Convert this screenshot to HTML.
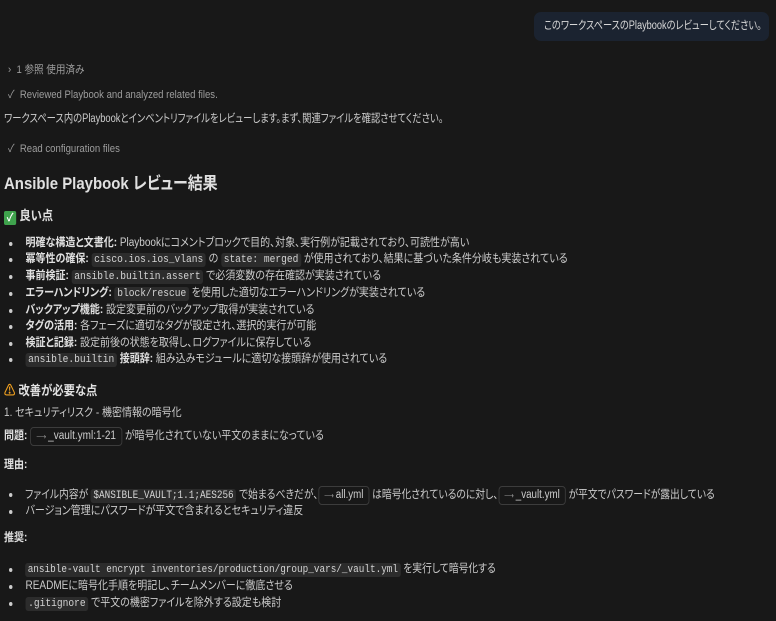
<!DOCTYPE html>
<html><head><meta charset="utf-8"><style>
body{margin:0;background:#181818;width:776px;height:621px;overflow:hidden;position:relative;font-family:"Liberation Sans","Noto Sans CJK JP",sans-serif;color:#cccccc;font-size:11.5px;font-feature-settings:"palt"}
.l{position:absolute;left:4px;white-space:nowrap;line-height:16px;transform:scaleX(0.87);transform-origin:0 0}
.dim{color:#9d9d9d;font-size:11px}
.b{left:9px}
.b::before{content:"";position:absolute;left:0;top:7px;width:4px;height:4px;border-radius:50%;background:#ccc}
.b span.t{margin-left:19px}
code{font-family:"Liberation Mono",monospace;font-size:11px;background:#2c2c2c;border-radius:3px;padding:1px 3px;color:#d4d4d4;font-feature-settings:normal}
.f{display:inline-block;border:1px solid #3c3c3c;border-radius:4px;padding:0 6px;line-height:17px;color:#ccc}
.f::before{content:"⟶ ";font-size:8px;color:#999}
strong{color:#e0e0e0;font-weight:bold}
</style></head><body>
<div style="position:absolute;left:534px;top:12px;width:235px;height:29px;background:#1b2330;border-radius:7px"></div>
<div class="l" style="left:544px;top:18px;color:#d8d8d8;font-size:11.5px;transform:scaleX(0.8)">このワークスペースのPlaybookのレビューしてください。</div>
<div class="l dim" style="top:62px;left:8px">›&nbsp;&nbsp;1 参照 使用済み</div>
<div class="l dim" style="top:87px;left:8px">✓&nbsp;&nbsp;Reviewed Playbook and analyzed related files.</div>
<div class="l" style="top:111px;transform:scaleX(0.81)">ワークスペース内のPlaybookとインベントリファイルをレビューします。まず、関連ファイルを確認させてください。</div>
<div class="l dim" style="top:141px;left:8px">✓&nbsp;&nbsp;Read configuration files</div>
<div class="l" style="top:172px;font-size:17px;font-weight:bold;color:#e0e0e0;line-height:24px;transform:scaleX(0.88)">Ansible Playbook レビュー結果</div>
<div class="l" style="top:207px;font-size:13px;font-weight:bold;color:#e0e0e0;line-height:18px"><span style="display:inline-block;width:14px;height:14px;background:#3fa34d;border-radius:2px;color:#fff;font-size:11px;line-height:14px;text-align:center;vertical-align:-1px">✓</span>&nbsp;良い点</div>
<div class="l b" style="top:235px"><span class="t"><strong>明確な構造と文書化:</strong> Playbookにコメントブロックで目的、対象、実行例が記載されており、可読性が高い</span></div>
<div class="l b" style="top:251px"><span class="t"><strong>冪等性の確保:</strong> <code>cisco.ios.ios_vlans</code> の <code>state: merged</code> が使用されており、結果に基づいた条件分岐も実装されている</span></div>
<div class="l b" style="top:268px"><span class="t"><strong>事前検証:</strong> <code>ansible.builtin.assert</code> で必須変数の存在確認が実装されている</span></div>
<div class="l b" style="top:285px"><span class="t"><strong>エラーハンドリング:</strong> <code>block/rescue</code> を使用した適切なエラーハンドリングが実装されている</span></div>
<div class="l b" style="top:302px"><span class="t"><strong>バックアップ機能:</strong> 設定変更前のバックアップ取得が実装されている</span></div>
<div class="l b" style="top:318px"><span class="t"><strong>タグの活用:</strong> 各フェーズに適切なタグが設定され、選択的実行が可能</span></div>
<div class="l b" style="top:335px"><span class="t"><strong>検証と記録:</strong> 設定前後の状態を取得し、ログファイルに保存している</span></div>
<div class="l b" style="top:351px"><span class="t"><code>ansible.builtin</code> <strong>接頭辞:</strong> 組み込みモジュールに適切な接頭辞が使用されている</span></div>
<div class="l" style="top:382px;font-size:13px;font-weight:bold;color:#e0e0e0;line-height:18px"><span style="color:#f0a020">⚠</span>&nbsp;改善が必要な点</div>
<div class="l" style="top:405px">1. セキュリティリスク - 機密情報の暗号化</div>
<div class="l" style="top:427px"><strong>問題:</strong> <span class="f">_vault.yml:1-21</span> が暗号化されていない平文のままになっている</div>
<div class="l" style="top:457px"><strong>理由:</strong></div>
<div class="l b" style="top:486px;transform:scaleX(0.85)"><span class="t">ファイル内容が <code>$ANSIBLE_VAULT;1.1;AES256</code> で始まるべきだが、<span class="f">all.yml</span> は暗号化されているのに対し、<span class="f">_vault.yml</span> が平文でパスワードが露出している</span></div>
<div class="l b" style="top:503px"><span class="t">バージョン管理にパスワードが平文で含まれるとセキュリティ違反</span></div>
<div class="l" style="top:530px"><strong>推奨:</strong></div>
<div class="l b" style="top:561px;transform:scaleX(0.85)"><span class="t"><code>ansible-vault encrypt inventories/production/group_vars/_vault.yml</code> を実行して暗号化する</span></div>
<div class="l b" style="top:578px"><span class="t">READMEに暗号化手順を明記し、チームメンバーに徹底させる</span></div>
<div class="l b" style="top:595px"><span class="t"><code>.gitignore</code> で平文の機密ファイルを除外する設定も検討</span></div>
</body></html>
